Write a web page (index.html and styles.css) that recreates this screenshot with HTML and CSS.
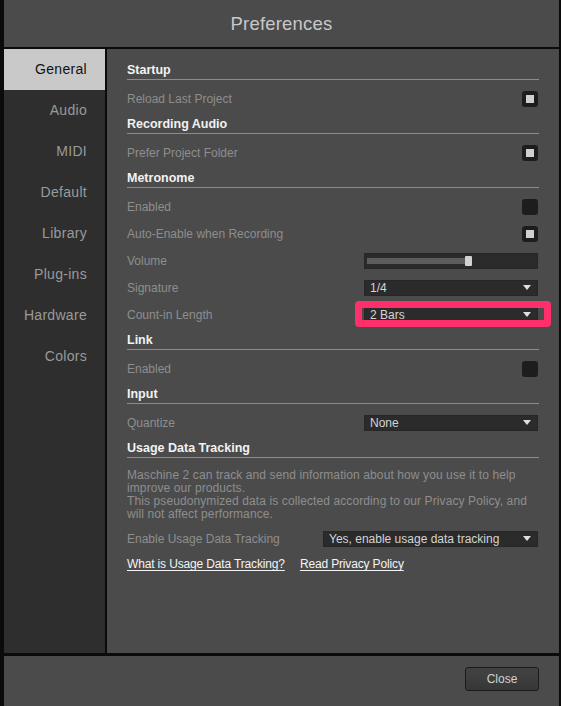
FILE: index.html
```html
<!DOCTYPE html>
<html lang="en">
  <head>
    <meta charset="UTF-8" />
    <meta name="viewport" content="width=device-width, initial-scale=1.0" />
    <title>Preferences</title>
    <link rel="stylesheet" href="styles.css">
  </head>
  <body>
    <div class="window">
      <div class="titleBar">Preferences</div>

      <div class="mainWrap">
        <ul class="sideNav">
          <li class="active">General</li>
          <li>Audio</li>
          <li>MIDI</li>
          <li>Default</li>
          <li>Library</li>
          <li>Plug-ins</li>
          <li>Hardware</li>
          <li>Colors</li>
        </ul>

        <div class="content">
          <h2>Startup</h2>
          <div class="row">
            <span>Reload Last Project</span>
            <span class="check on"></span>
          </div>

          <h2>Recording Audio</h2>
          <div class="row">
            <span>Prefer Project Folder</span>
            <span class="check on"></span>
          </div>

          <h2>Metronome</h2>
          <div class="row">
            <span>Enabled</span>
            <span class="check"></span>
          </div>
          <div class="row">
            <span>Auto-Enable when Recording</span>
            <span class="check on"></span>
          </div>
          <div class="row">
            <span>Volume</span>
            <div class="slider">
              <div class="track"></div>
              <div class="thumb"></div>
            </div>
          </div>
          <div class="row">
            <span>Signature</span>
            <div class="select">
              <span>1/4</span>
              <svg width="8" height="5" viewBox="0 0 8 5"><path d="M0 0h8L4 5z" fill="#e0e0e0"/></svg>
            </div>
          </div>
          <div class="row">
            <span>Count-in Length</span>
            <div class="select marked">
              <span>2 Bars</span>
              <svg width="8" height="5" viewBox="0 0 8 5"><path d="M0 0h8L4 5z" fill="#e0e0e0"/></svg>
            </div>
          </div>

          <h2>Link</h2>
          <div class="row">
            <span>Enabled</span>
            <span class="check"></span>
          </div>

          <h2>Input</h2>
          <div class="row">
            <span>Quantize</span>
            <div class="select">
              <span>None</span>
              <svg width="8" height="5" viewBox="0 0 8 5"><path d="M0 0h8L4 5z" fill="#e0e0e0"/></svg>
            </div>
          </div>

          <h2>Usage Data Tracking</h2>
          <p class="note">
            Maschine 2 can track and send information about how you use it to help improve our products.<br>
            This pseudonymized data is collected according to our Privacy Policy, and will not affect performance.
          </p>
          <div class="row">
            <span>Enable Usage Data Tracking</span>
            <div class="select wide">
              <span>Yes, enable usage data tracking</span>
              <svg width="8" height="5" viewBox="0 0 8 5"><path d="M0 0h8L4 5z" fill="#e0e0e0"/></svg>
            </div>
          </div>
          <div class="links">
            <a href="#">What is Usage Data Tracking?</a>
            <a href="#">Read Privacy Policy</a>
          </div>
        </div>
      </div>

      <div class="footer">
        <button class="closeBtn">Close</button>
      </div>
    </div>
  </body>
</html>
```

FILE: styles.css
```css
* {
  margin: 0;
  padding: 0;
  box-sizing: border-box;
}
body {
  background-color: #0b0b0b;
  font-family: "Liberation Sans", Arial, sans-serif;
}
.window {
  width: 561px;
  height: 706px;
  display: flex;
  flex-direction: column;
  padding: 0 2px 0 4px;
  background-color: #0b0b0b;
}
.titleBar {
  height: 47px;
  line-height: 47px;
  text-align: center;
  font-size: 18.5px;
  letter-spacing: 0.2px;
  color: #c8c8c8;
  background-color: #4b4b4b;
}
.mainWrap {
  display: flex;
  gap: 2px;
  height: 604px;
  margin-top: 2px;
}
ul.sideNav {
  width: 101px;
  list-style: none;
  background-color: #2e2e2e;
}
ul.sideNav li {
  height: 41px;
  line-height: 41px;
  padding-right: 18px;
  text-align: right;
  font-size: 14px;
  letter-spacing: 0.3px;
  color: #9a9a9a;
}
ul.sideNav li.active {
  color: #111;
  background-color: #c9c9c9;
}
.content {
  flex: 1;
  padding: 9px 20px 0 20px;
  background-color: #4b4b4b;
}
.content h2 {
  height: 22px;
  padding-top: 3px;
  line-height: 18px;
  margin-bottom: 5px;
  font-size: 12.5px;
  font-weight: bold;
  color: #f2f2f2;
  border-bottom: 1px solid #8c8c8c;
}
.row {
  display: flex;
  justify-content: space-between;
  align-items: center;
  height: 27px;
  font-size: 12px;
  color: #8e8e8e;
}
.check {
  width: 16px;
  height: 16px;
  margin-right: 1px;
  border-radius: 3px;
  background-color: #1d1d1d;
  position: relative;
}
.check.on::after {
  content: '';
  position: absolute;
  top: 4px;
  left: 4px;
  width: 8px;
  height: 8px;
  background-color: #d0d0d0;
}
.slider {
  width: 174px;
  height: 16px;
  margin-right: 1px;
  background-color: #2b2b2b;
  border: 1px solid #262626;
  position: relative;
}
.slider .track {
  position: absolute;
  top: 4px;
  left: 2px;
  width: 99px;
  height: 6px;
  background-color: #5c5c5c;
}
.slider .thumb {
  position: absolute;
  top: 2px;
  left: 100px;
  width: 7px;
  height: 10px;
  border-radius: 1px;
  background-color: #d2d2d2;
}
.select {
  width: 174px;
  height: 16px;
  margin-right: 1px;
  display: flex;
  justify-content: space-between;
  align-items: center;
  padding: 0 6px 0 5px;
  font-size: 12px;
  color: #d4d4d4;
  background-color: #2b2b2b;
  border: 1px solid #262626;
  position: relative;
}
.select.wide {
  width: 215px;
}
.select.marked::after {
  content: '';
  position: absolute;
  top: -7px;
  left: -10px;
  right: -14px;
  bottom: -5px;
  border: 7px solid #fe2f6b;
  border-radius: 4px;
}
.note {
  padding-top: 6px;
  margin-bottom: 4px;
  max-width: 405px;
  font-size: 12px;
  line-height: 13px;
  letter-spacing: 0.1px;
  color: #8e8e8e;
}
.links {
  display: flex;
  gap: 15px;
  margin-top: 6px;
  line-height: 13px;
}
.links a {
  font-size: 12px;
  letter-spacing: -0.15px;
  color: #f4f4f4;
  text-decoration: underline;
  text-underline-offset: 2px;
}
.footer {
  flex: 1;
  margin-top: 3px;
  display: flex;
  justify-content: flex-end;
  align-items: flex-start;
  padding: 11px 20px 0 0;
  background-color: #4b4b4b;
}
.closeBtn {
  width: 74px;
  height: 24px;
  font-family: "Liberation Sans", Arial, sans-serif;
  font-size: 12px;
  color: #d2d2d2;
  background: linear-gradient(#434343, #373737);
  border: 1px solid #1b1b1b;
  border-radius: 3px;
}
```
